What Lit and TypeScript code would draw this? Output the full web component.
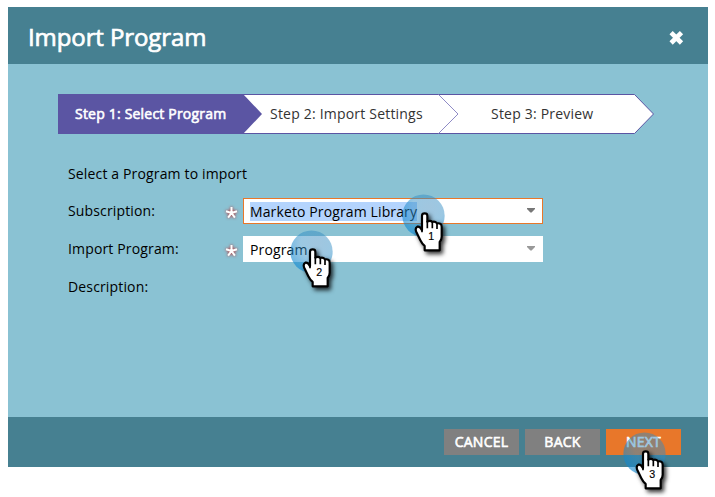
import { LitElement, html, css } from "lit";
import { customElement, property } from "lit/decorators.js";

@customElement("tap-marker")
class TapMarker extends LitElement {
  @property() label = "";
  static styles = css`
    :host { position: absolute; width: 80px; height: 77px; pointer-events: none; }
    svg { display: block; overflow: visible; }
    .num { font: 32px "Liberation Sans", Arial, sans-serif; }
    .hand { filter: drop-shadow(7px 8px 7px rgba(0, 0, 0, 0.8)); }
  `;
  render() {
    return html`<svg width="80" height="77" viewBox="0 0 240 231">
      <defs>
        <radialGradient id="g" cx="62%" cy="30%" r="75%">
          <stop offset="0" stop-color="#3a88bc" stop-opacity="0.48" />
          <stop offset="0.5" stop-color="#2f8cc4" stop-opacity="0.48" />
          <stop offset="1" stop-color="#0a88d4" stop-opacity="0.62" />
        </radialGradient>
      </defs>
      <circle cx="73.5" cy="101" r="63.5" fill="url(#g)" />
      <g class="hand">
        <path
          d="M69 145V101Q69 94 77 94Q85 94 85 101V119Q94 114 100 120Q108 117 114 124Q128 122 128 135V164Q128 173 122 180V205H77V192Q70 187 64 175L52 150Q47 138 55 134Q63 132 69 145Z"
          fill="#fff" stroke="#000" stroke-width="6.5" stroke-linejoin="round" />
        <path d="M85 117V139M100 120V139M114 124V141M69 139V151" fill="none" stroke="#000" stroke-width="5" />
      </g>
      <text class="num" x="97" y="175" text-anchor="middle" stroke="#000" stroke-width="0.5">${this.label}</text>
    </svg>`;
  }
}

@customElement("app-root")
class AppRoot extends LitElement {
  static styles = css`
    :host { display: block; position: relative; width: 715px; height: 497px; overflow: hidden; background: #fff; font-family: "Open Sans", "Noto Sans", sans-serif; font-size: 14px; letter-spacing: 0.15px; color: #000; }
    * { box-sizing: border-box; }
    .dialog { display: flex; flex-direction: column; width: 700px; height: 460px; margin-left: 8px; background: #8ac2d3; }
    .page { padding-top: 7px; }
    header { height: 57px; flex: none; background: #468091; color: #fff; display: flex; align-items: center; justify-content: space-between; padding: 3px 24px 0 20px; }
    h1 { margin: 0; font-size: 24px; line-height: 30px; font-weight: 400; letter-spacing: -0.1px; -webkit-text-stroke: 0.7px #fff; white-space: nowrap; }
    .close { display: block; }
    main { flex: 1; padding: 30px 50px 0; }
    .steps { display: grid; grid-template-columns: 1fr; width: 596px; height: 40px; }
    .steps > * { grid-area: 1 / 1; }
    .labels { display: flex; line-height: 40px; color: #333; white-space: nowrap; letter-spacing: 0.2px; }
    .labels span { display: block; }
    .s1 { width: 212px; padding-left: 17px; color: #fff; -webkit-text-stroke: 0.6px #fff; }
    .s2 { width: 221px; }
    .form { padding: 30px 0 0 10px; white-space: nowrap; }
    .intro { height: 34px; line-height: 20px; }
    .row { display: flex; height: 38px; }
    .label { width: 157px; line-height: 26px; }
    .req { width: 18px; height: 26px; padding-top: 9px; }
    .req svg { display: block; overflow: visible; filter: drop-shadow(0 0 1.5px #c02828); }
    .field { width: 300px; height: 26px; background: #fff; border: 1px solid #fff; padding: 3px 7px 0 6px; display: flex; justify-content: space-between; }
    .field.focus { border-color: #e8772a; }
    .value { line-height: 19px; height: 19px; letter-spacing: 0.12px; }
    .focus .value { background: #b4d4fd; }
    .arrow { margin-top: 6px; }
    footer { height: 50px; flex: none; background: #468091; display: flex; justify-content: flex-end; gap: 6px; padding: 12px 27px 0 0; }
    .btn { width: 75px; height: 26px; line-height: 26px; text-align: center; color: #fff; background: #808080; letter-spacing: 0.25px; -webkit-text-stroke: 0.6px #fff; }
    .btn.primary { background: #e8772a; }
    .m1 { left: 398.5px; top: 182px; }
    .m2 { left: 287px; top: 218px; }
    .m3 { left: 620px; top: 420px; }
  `;

  private row(label: string, value?: string, focus = false) {
    return html`<div class="row">
      <div class="label">${label}</div>
      ${value
        ? html`<div class="req">
              <svg width="12" height="12" viewBox="-6.5 -6 12 12">
                <path d="M0 0V-6M0 0L5.5-1.8M0 0L3.4 4.7M0 0L-3.4 4.7M0 0L-5.5-1.8" stroke="#fff" stroke-width="2" />
              </svg>
            </div>
            <div class="field ${focus ? "focus" : ""}">
              <span class="value">${value}</span>
              <svg class="arrow" width="8" height="5" viewBox="0 0 8 5">
                <path d="M0 0H8V1L4.6 4.5H3.4L0 1Z" fill=${focus ? "#777" : "#999"} />
              </svg>
            </div>`
        : null}
    </div>`;
  }

  render() {
    return html`
      <div class="page">
        <div class="dialog">
          <header>
            <h1>Import Program</h1>
            <svg class="close" width="16" height="16" viewBox="0 0 16 16">
              <path d="M3.1 3.6L13.5 14M13.5 3.6L3.1 14" stroke="#fff" stroke-width="4.6" />
            </svg>
          </header>
          <main>
            <div class="steps">
              <svg width="596" height="40" viewBox="0 0 596 40">
                <path d="M0.5 .5H576.5L595.5 20L576.5 39.5H.5Z" fill="#fff" stroke="#5b55a3" />
                <path d="M0 0H185L204 20L185 40H0Z" fill="#5b55a3" />
                <path d="M380.5 .5L400 20L380.5 39.5" fill="none" stroke="#8f8bc6" />
              </svg>
              <div class="labels">
                <span class="s1">Step 1: Select Program</span>
                <span class="s2">Step 2: Import Settings</span>
                <span>Step 3: Preview</span>
              </div>
            </div>
            <div class="form">
              <div class="intro">Select a Program to import</div>
              ${this.row("Subscription:", "Marketo Program Library", true)}
              ${this.row("Import Program:", "Program")}
              ${this.row("Description:")}
            </div>
          </main>
          <footer>
            <div class="btn">CANCEL</div>
            <div class="btn">BACK</div>
            <div class="btn primary">NEXT</div>
          </footer>
        </div>
      </div>
      <tap-marker class="m1" label="1"></tap-marker>
      <tap-marker class="m2" label="2"></tap-marker>
      <tap-marker class="m3" label="3"></tap-marker>
    `;
  }
}
